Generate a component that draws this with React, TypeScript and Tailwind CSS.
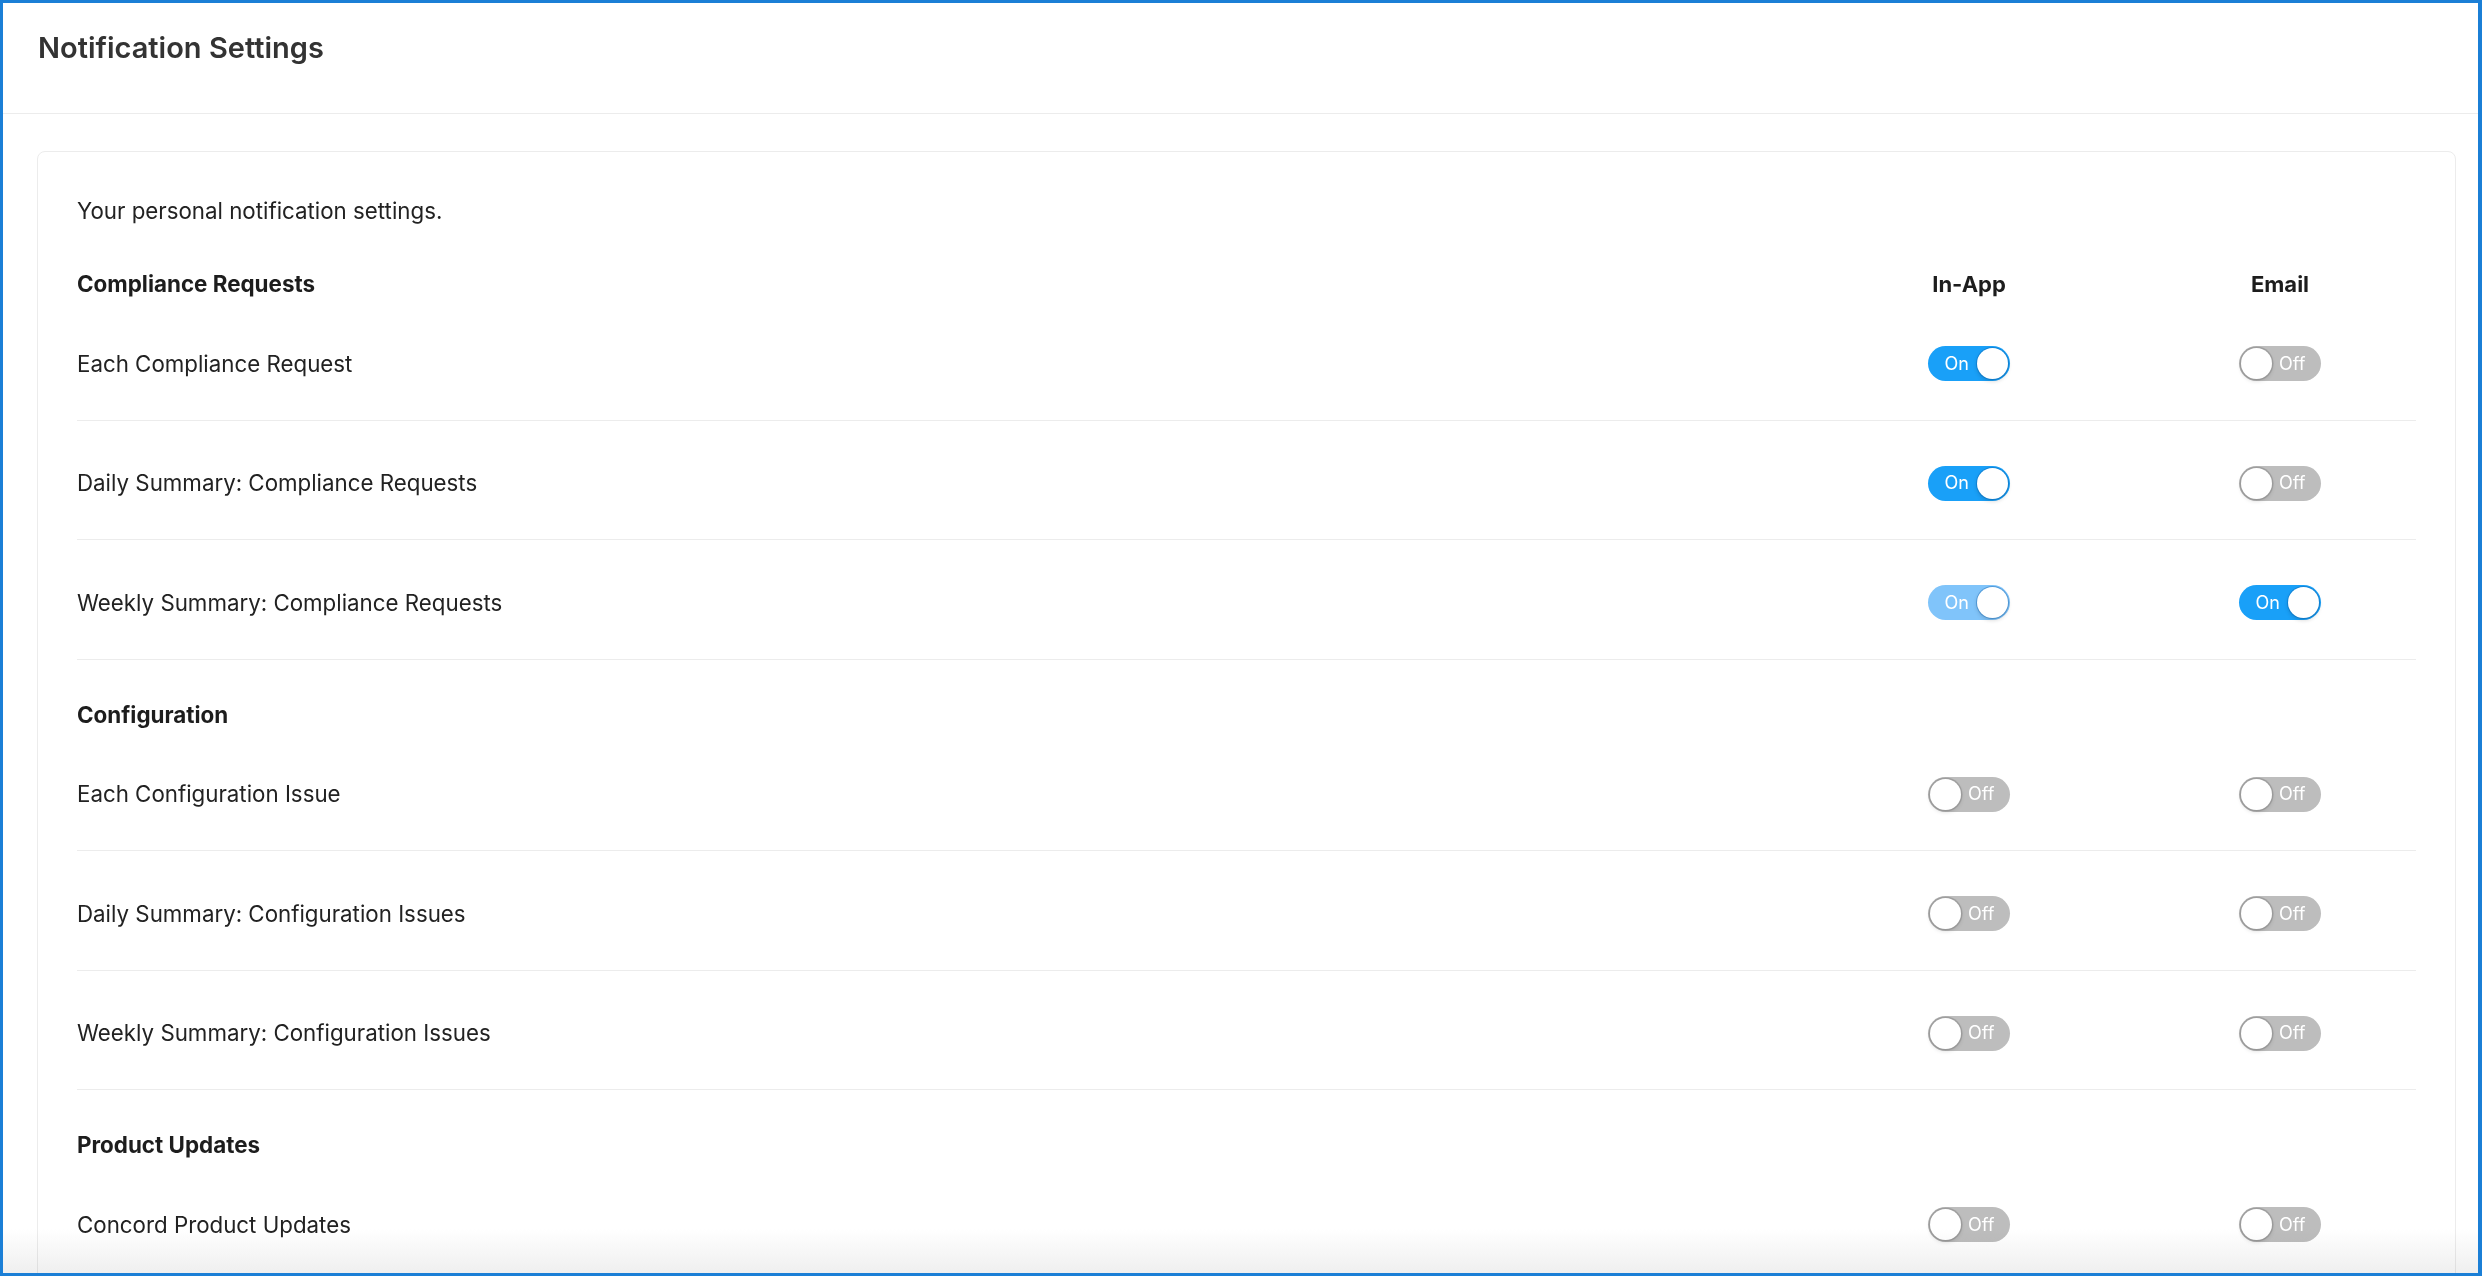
import React, { useState } from 'react';

type Row = { id: string; label: string; inApp: boolean; email: boolean; inAppMuted?: boolean };
type Section = { title: string; rows: Row[] };

const sections: Section[] = [
  {
    title: 'Compliance Requests',
    rows: [
      { id: 'cr-each', label: 'Each Compliance Request', inApp: true, email: false },
      { id: 'cr-daily', label: 'Daily Summary: Compliance Requests', inApp: true, email: false },
      { id: 'cr-weekly', label: 'Weekly Summary: Compliance Requests', inApp: true, email: true, inAppMuted: true },
    ],
  },
  {
    title: 'Configuration',
    rows: [
      { id: 'cf-each', label: 'Each Configuration Issue', inApp: false, email: false },
      { id: 'cf-daily', label: 'Daily Summary: Configuration Issues', inApp: false, email: false },
      { id: 'cf-weekly', label: 'Weekly Summary: Configuration Issues', inApp: false, email: false },
    ],
  },
  {
    title: 'Product Updates',
    rows: [{ id: 'pu-concord', label: 'Concord Product Updates', inApp: false, email: false }],
  },
];

const Toggle = ({ on, muted, onChange }: { on: boolean; muted?: boolean; onChange: () => void }) => {
  const track = on ? (muted ? 'bg-[#80c4fa]' : 'bg-[#19a0f8]') : 'bg-[#bdbdbd]';
  return (
    <button
      type="button"
      onClick={onChange}
      className={`flex items-center w-[82px] h-[35px] rounded-full ${track} ${
        on ? 'justify-end pl-[16px] pr-[2px] gap-[8px]' : 'justify-start pl-[2px] pr-[14px] gap-[7px]'
      }`}
    >
      {on && <span className="text-[18px] leading-none text-white">On</span>}
      <span
        className={`w-[31px] h-[31px] rounded-full bg-white shrink-0 ${
          on
            ? 'shadow-[0_0_0_1px_rgba(0,90,170,0.35),0_2px_4px_rgba(0,0,0,0.18)]'
            : 'shadow-[0_0_0_1.5px_rgba(140,140,140,0.6),0_2px_4px_rgba(0,0,0,0.15)]'
        }`}
      />
      {!on && <span className="text-[18px] leading-none text-white">Off</span>}
    </button>
  );
};

export default function App() {
  const [state, setState] = useState(() =>
    Object.fromEntries(sections.flatMap((s) => s.rows.map((r) => [r.id, { inApp: r.inApp, email: r.email }])))
  );

  const flip = (id: string, key: 'inApp' | 'email') =>
    setState((prev) => ({ ...prev, [id]: { ...prev[id], [key]: !prev[id][key] } }));

  return (
    <div
      className="relative h-screen overflow-hidden bg-white border-t-[3px] border-l-[3px] border-b-[3px] border-r-[4px] border-[#1b7fd6] text-[#222]"
      style={{ fontFamily: 'Inter, "Noto Sans", sans-serif' }}
    >
      {/* page header */}
      <div className="pt-[28px] pb-[48px] pl-[35px] border-b border-[#ececec]">
        <h1 className="text-[29px] leading-[34px] font-semibold text-[#333]">Notification Settings</h1>
      </div>

      {/* settings card */}
      <div className="mt-[37px] ml-[34px] mr-[22px] border border-[#ececec] rounded-lg px-[39px] pt-[44px]">
        <p className="text-[22.3px] leading-[30px]">Your personal notification settings.</p>

        {sections.map((section, si) => (
          <div key={section.title} className={si === 0 ? 'pt-[43px]' : 'pt-[40px]'}>
            <div className="grid grid-cols-[1fr_272px_272px] gap-x-[39px] items-center mb-[2px]">
              <h2 className="text-[22.4px] leading-[30px] font-bold text-[#1d1d1d]">{section.title}</h2>
              {si === 0 && (
                <>
                  <span className="text-[22px] leading-[30px] font-bold text-center text-[#1d1d1d]">In-App</span>
                  <span className="text-[22px] leading-[30px] font-bold text-center text-[#1d1d1d]">Email</span>
                </>
              )}
            </div>

            {section.rows.map((row) => (
              <div
                key={row.id}
                className="grid grid-cols-[1fr_272px_272px] gap-x-[39px] items-center pt-[45px] pb-[38.5px] border-b border-[#ececec]"
              >
                <span className="text-[22.3px] leading-[30px]">{row.label}</span>
                <div className="flex justify-center">
                  <Toggle on={state[row.id].inApp} muted={row.inAppMuted} onChange={() => flip(row.id, 'inApp')} />
                </div>
                <div className="flex justify-center">
                  <Toggle on={state[row.id].email} onChange={() => flip(row.id, 'email')} />
                </div>
              </div>
            ))}
          </div>
        ))}
      </div>

      {/* soft fade at the bottom edge of the scroll area */}
      <div className="pointer-events-none absolute inset-x-0 bottom-0 h-[44px] bg-gradient-to-b from-white to-[#efefef] mix-blend-multiply" />
    </div>
  );
}
